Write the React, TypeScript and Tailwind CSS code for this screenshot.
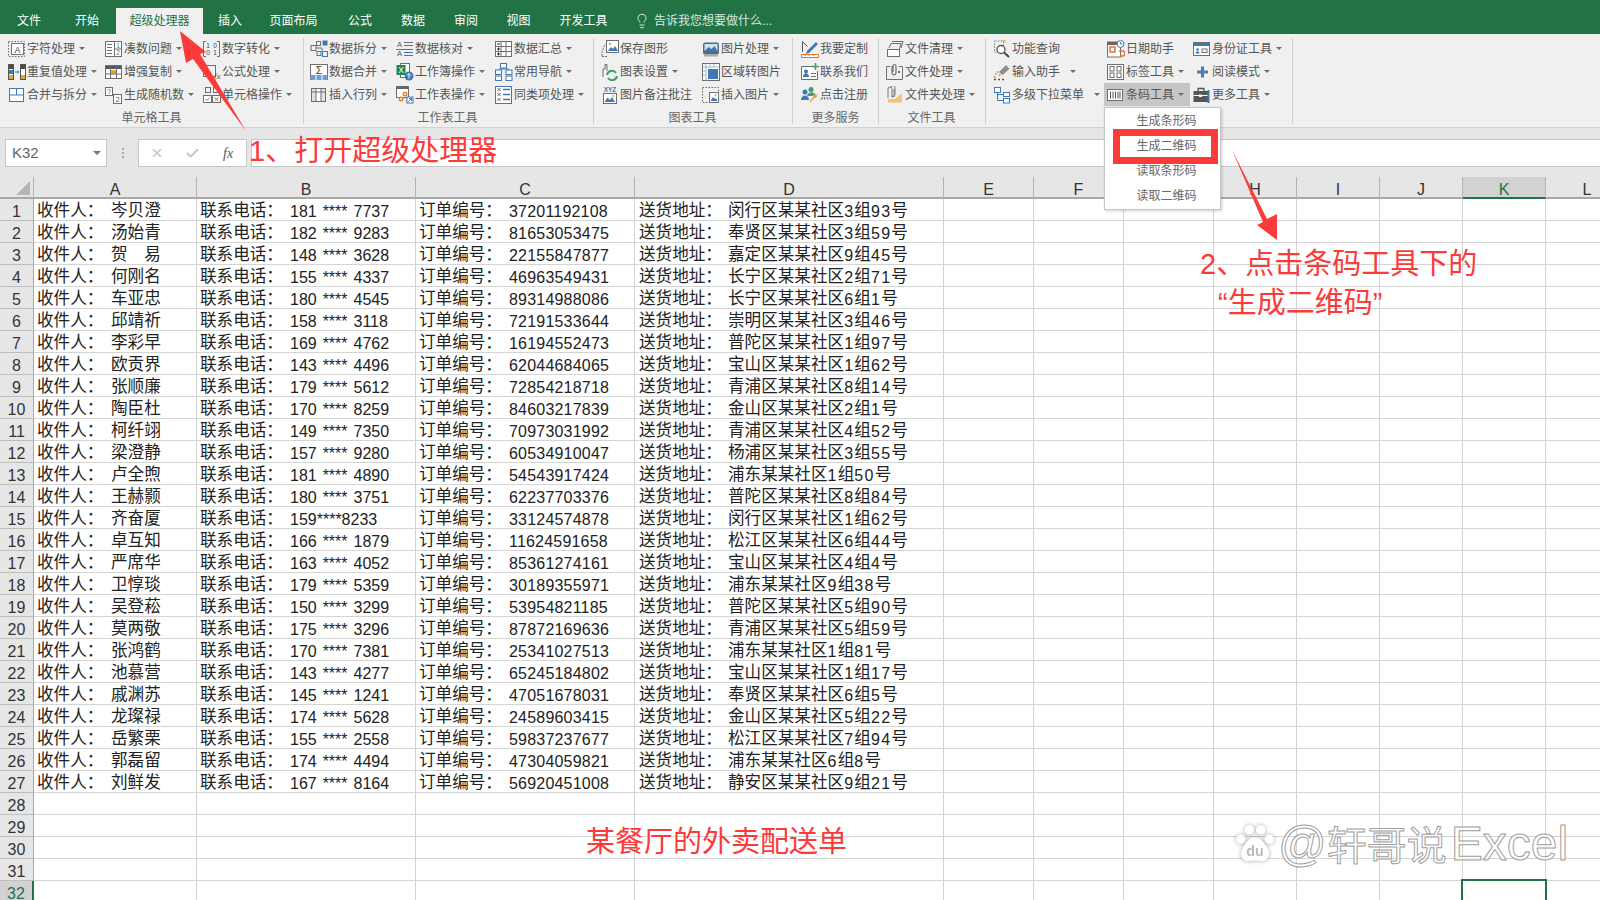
import { Check, Lightbulb, X } from 'lucide-react';
import type { ReactNode } from 'react';

const G = '#6e6e6e';
const B = '#3f78b5';
const O = '#e9a23b';
const GR = '#3f9b73';

function I({ children }: { children: ReactNode }) {
  return (
    <svg viewBox="0 0 18 18" className="w-[18px] h-[18px] shrink-0" fill="none" strokeWidth="1">
      {children}
    </svg>
  );
}

function Tx({ x, y, s, c, t }: { x: number; y: number; s: number; c: string; t: string }) {
  return (
    <text x={x} y={y} fontSize={s} fill={c} textAnchor="middle" fontFamily="Liberation Sans">
      {t}
    </text>
  );
}

const icons: Record<string, ReactNode> = {
  zifu: (
    <I>
      <rect x=".5" y="1.5" width="16" height="15" stroke={G} strokeDasharray="1.5 1.5" />
      <rect x="3.5" y="3.5" width="12" height="11" fill="#fff" stroke="#777" />
      <Tx x={9.5} y={12.5} s={9} c="#444" t="A" />
    </I>
  ),
  coushu: (
    <I>
      <rect x=".5" y="1.5" width="16" height="15" fill="#fff" stroke={G} />
      <path d="M2 4.500h5M2 7.500h5M2 10.500h5M2 13.500h5M9.500 2v14M9.500 9h7" stroke={G} />
      <Tx x={13} y={7.5} s={6.5} c={B} t="1" />
      <Tx x={13} y={15} s={6.5} c={B} t="2" />
    </I>
  ),
  shuzi: (
    <I>
      <path d="M3 1.500H.5v15H3M14 1.500h2.500v15H14" stroke={G} />
      <Tx x={5} y={8} s={6.5} c="#444" t="1" />
      <Tx x={12} y={8} s={6.5} c="#444" t="0" />
      <Tx x={5} y={15} s={6.5} c="#444" t="0" />
      <Tx x={12} y={15} s={6.5} c="#444" t="1" />
    </I>
  ),
  chongfu: (
    <I>
      <rect x=".5" y="1.5" width="5" height="15" fill="#fff" stroke="#555" />
      <rect x="12.5" y="1.5" width="5" height="15" fill="#fff" stroke="#555" />
      <rect x="1" y="2" width="4" height="4" fill="#4a4a4a" />
      <rect x="1" y="7" width="4" height="4" fill={B} />
      <rect x="1" y="12" width="4" height="4" fill={O} />
      <rect x="13" y="2" width="4" height="4" fill="#4a4a4a" />
      <rect x="13" y="12" width="4" height="4" fill={O} />
      <path d="M7 9h4M9.500 7.500 11 9l-1.500 1.500" stroke={B} />
    </I>
  ),
  zengqiang: (
    <I>
      <rect x=".5" y="2.5" width="16" height="13" fill="#fff" stroke={G} />
      <rect x="1" y="3" width="15" height="3" fill="#475a70" />
      <rect x="5.5" y="7" width="6" height="4" fill={O} />
      <path d="M5.500 3v12M11.500 3v12M1 11h15" stroke={G} />
    </I>
  ),
  gongshi: (
    <I>
      <rect x=".5" y="2.5" width="12" height="11" stroke={G} />
      <text x="11" y="16" fontSize="9" fontStyle="italic" fill="#555" fontFamily="Liberation Serif">
        fx
      </text>
    </I>
  ),
  hebing: (
    <I>
      <rect x="1.5" y="2.5" width="14" height="13" fill="#fff" stroke={B} />
      <path d="M1.500 9h14M8.500 2.500V9" stroke={B} />
    </I>
  ),
  suiji: (
    <I>
      <rect x=".5" y="1.5" width="7" height="8" fill="#fff" stroke={G} />
      <rect x="8.5" y="8.5" width="8" height="9" fill="#fff" stroke={G} />
      <Tx x={4} y={8} s={6.5} c="#555" t="?" />
      <Tx x={12.5} y={16} s={7.5} c="#555" t="2" />
    </I>
  ),
  danyuan: (
    <I>
      <rect x="2.5" y="1.5" width="5" height="5" stroke={G} />
      <rect x="10.5" y="1.5" width="5" height="5" stroke={G} />
      <rect x=".5" y="9.5" width="8" height="7" fill="#fff" stroke={G} />
      <rect x="9.5" y="9.5" width="8" height="7" fill="#fff" stroke={G} />
      <path d="m2.500 13 1.500 1.500L7 11.500" stroke={GR} />
      <path d="m11.500 11.500 4 3.500m0-3.500-4 3.500" stroke="#d9534f" />
    </I>
  ),
  chaifen: (
    <I>
      <rect x="1" y="5.5" width="5" height="5" stroke={G} />
      <rect x="6.5" y="1.5" width="4" height="4" stroke={G} />
      <rect x="12.5" y=".5" width="5" height="5" fill={B} />
      <rect x="7" y="11.5" width="4" height="4" stroke={G} />
      <rect x="12.5" y="11.5" width="5" height="5" stroke={B} />
      <path d="M6 8h6M12 8v3" stroke={B} />
    </I>
  ),
  hedui: (
    <I>
      <Tx x={3.5} y={7} s={7.5} c="#555" t="A" />
      <Tx x={3.5} y={16} s={7.5} c="#555" t="A" />
      <path d="M8 2.500h9M8 5.500h9M0 9.500h17" stroke={G} />
      <path d="M8 12.500h9M8 15.500h9" stroke={B} />
    </I>
  ),
  huizong: (
    <I>
      <rect x=".5" y="1.5" width="16" height="15" fill="#fff" stroke={G} />
      <path d="M.5 6.500h16M.5 11.500h16M6 1.500v15M11 1.500v15" stroke={G} />
      <path d="M2 4h3M2 9h3M3.500 7.500v3M2 14h3M3.500 12.500v3" stroke="#333" />
    </I>
  ),
  hebing2: (
    <I>
      <rect x=".5" y="1.5" width="17" height="15" fill="#fff" stroke={G} />
      <Tx x={9} y={10.5} s={10} c="#333" t="Σ" />
      <rect x=".5" y="12" width="17" height="5" fill="#6fa0d2" />
      <path d="M6 12v5M12 12v5" stroke="#fff" />
    </I>
  ),
  gongzuobu: (
    <I>
      <rect x="4.5" y=".5" width="9" height="14" fill="#fff" stroke={G} />
      <rect x=".5" y="2" width="9" height="10" fill="#23874e" />
      <Tx x={5} y={10} s={8.5} c="#fff" t="X" />
      <circle cx="13" cy="13" r="4.5" fill={B} />
      <path d="M13 15.500v-4.500M11 12.500l2-2 2 2" stroke="#fff" />
    </I>
  ),
  daohang: (
    <I>
      <rect x="5.5" y=".5" width="6" height="4.5" fill="#fff" stroke={B} />
      <rect x=".5" y="7" width="6" height="4.5" fill="#fff" stroke={B} />
      <rect x=".5" y="13" width="6" height="4.5" fill="#fff" stroke={B} />
      <rect x="11" y="7" width="6" height="4.5" fill="#fff" stroke={B} />
      <rect x="11" y="13" width="6" height="4.5" fill="#fff" stroke={B} />
      <path d="M8.500 5v1M3.500 6h10v1" stroke={B} />
    </I>
  ),
  hanglie: (
    <I>
      <rect x="1.5" y="2.5" width="14" height="13" fill="#dfe3e8" stroke={G} />
      <rect x="6" y="3" width="5" height="12" fill="#fff" />
      <path d="M6 2.500v13M11 2.500v13M1.500 6h14" stroke={G} />
    </I>
  ),
  gongzuobiao: (
    <I>
      <rect x=".5" y=".5" width="12" height="11" fill="#fff" stroke={G} />
      <rect x=".5" y=".5" width="12" height="2.5" fill="#666" />
      <circle cx="9" cy="8" r="2.500" fill="#e8822a" />
      <circle cx="5" cy="13" r="2.500" fill="#e8822a" />
      <circle cx="9" cy="8" r="1" fill="#fff" />
      <circle cx="5" cy="13" r="1" fill="#fff" />
      <rect x="11" y="11" width="6" height="6" fill="#fff" stroke={B} />
      <path d="m12.500 15.500 3-3m-2.500 0h2.500V15" stroke={B} />
    </I>
  ),
  tonglei: (
    <I>
      <rect x=".5" y=".5" width="16" height="17" fill="#fff" stroke={B} />
      <path d="M8 3.500h7M8 8.500h7M8 13.500h7" stroke={B} strokeWidth="1.5" />
      <path d="m2.500 2 3 3m0-3-3 3m0 2 3 3m0-3-3 3m0 2 3 3m0-3-3 3" stroke={G} />
    </I>
  ),
  baocun: (
    <I>
      <path d="M1 16.500h6M1 16v-4l3-8" stroke={G} strokeDasharray="2 1" />
      <rect x="5.5" y=".5" width="12" height="12" fill="#fff" stroke={G} />
      <path d="m7 11 3-4 2 2 2-3 3 5z" fill={B} />
      <circle cx="9" cy="4" r="1.2" fill={O} />
    </I>
  ),
  tubiao: (
    <I>
      <path d="M2 14V6h2V1.500h2V8" stroke={G} />
      <path d="M6 12a5 5 0 0 1 9-2M16 13a5 5 0 0 1-9 2" stroke={GR} strokeWidth="2" />
    </I>
  ),
  beizhu: (
    <I>
      <text x="9" y="6" fontSize="6.5" fontWeight="bold" fill={B} textAnchor="middle" fontFamily="Liberation Sans">
        XYZ
      </text>
      <rect x="2.5" y="7.5" width="13" height="10" fill="#fff" stroke={G} />
      <path d="m3.500 16 3-4.500 2.500 2.500 2-3 3 5z" fill={B} />
      <circle cx="12" cy="10" r="1" fill={O} />
    </I>
  ),
  tupian: (
    <I>
      <rect x="1" y="2.5" width="16" height="12" rx="2" fill="#5c6a72" />
      <rect x="2.5" y="4" width="13" height="7" fill="#cfe3ee" />
      <path d="m2.500 11 4-4 3 2 3-3 3 5z" fill={B} />
      <path d="M2 15.500h14" stroke="#a8a8a8" strokeWidth="2" />
    </I>
  ),
  quyu: (
    <I>
      <rect x=".5" y=".5" width="17" height="17" fill="#fff" stroke={G} />
      <path d="M.5 4h17M4 .5v17M1 8h3M1 12h3M8 1v3M12 1v3" stroke="#9db7d3" />
      <rect x="6" y="6" width="10" height="10" fill={B} />
    </I>
  ),
  charu: (
    <I>
      <rect x=".5" y="1.5" width="16" height="15" stroke={G} strokeDasharray="1.5 1.5" />
      <rect x="7.5" y="6.5" width="9" height="10" fill="#fff" stroke={G} />
      <path d="m8.500 15 2.500-4 2 2 1-1 1.500 3z" fill={B} />
      <circle cx="13.5" cy="9" r="1" fill={O} />
    </I>
  ),
  dingzhi: (
    <I>
      <path d="M1.500 12V1.500l5 5" stroke="#555" />
      <path d="m6 11 9-9 2 2-9 9-3 1z" fill={B} />
      <path d="M.5 14.500h17v3H.5z" fill="#fff" stroke="#e0762a" />
      <path d="M4 15v1M8 15v1M12 15v1" stroke="#e0762a" />
    </I>
  ),
  lianxi: (
    <I>
      <path d="M11 3.500H.5v13h16V8" fill="#fff" stroke={G} />
      <circle cx="5" cy="8.5" r="2" fill={B} />
      <path d="M2 14c0-5 6-5 6 0z" fill={B} />
      <path d="M10 10.500h5M10 13.500h5" stroke={G} />
      <path d="M14.500 0v7M11 3.500h7" stroke={GR} strokeWidth="1.5" />
    </I>
  ),
  zhuce: (
    <I>
      <circle cx="4" cy="6" r="2.5" fill={B} />
      <path d="M0 14c0-6 8-6 8 0z" fill={B} />
      <circle cx="10" cy="3.5" r="2.5" fill={GR} />
      <path d="M6 10c1-5 8-5 9 0z" fill={GR} />
      <circle cx="14" cy="10" r="2" fill={O} />
      <path d="m13 11-4 5" stroke={O} strokeWidth="1.5" />
    </I>
  ),
  qingli: (
    <I>
      <rect x="1.5" y="9.5" width="12" height="7" fill="#fff" stroke={G} />
      <path d="M3 8 5 3.500h10L13.500 9M6 1.500h11L15 8" stroke={G} />
    </I>
  ),
  wenjian: (
    <I>
      <path d="M4 3.500H.5v13h16v-13H13" stroke={G} />
      <path d="M6 3v7a2 2 0 0 0 4 0V3a1.500 1.500 0 0 0-3 0v6" stroke="#555" />
      <rect x="12" y="8" width="2" height="2" fill={B} />
    </I>
  ),
  wenjianjia: (
    <I>
      <path d="M2 12V3a2 2 0 0 1 4 0v7a1 1 0 0 0 2 0V3" stroke="#777" />
      <path d="M5 1.500a2 2 0 0 1 4 0v8a2.500 2.500 0 0 1-4 0" stroke="#777" />
      <path d="M2 16.500V13h7l7-6v9.500z" fill="#f0c27a" />
    </I>
  ),
  chaxun: (
    <I>
      <rect x="1.5" y="1" width="9" height="11" stroke="#9a9a9a" strokeDasharray="2 1" />
      <path d="M8 0h4v3" stroke={O} />
      <circle cx="8" cy="9.5" r="4" fill="#fff" stroke="#555" strokeWidth="1.3" />
      <path d="m11 12.500 5 4.500" stroke="#444" strokeWidth="2" />
    </I>
  ),
  shuru: (
    <I>
      <path d="m6 9 7-7 3.500 4-7 6" fill="#8f8f8f" />
      <path d="M2 11h2M4 9h2M6 12h2M1 14h2" stroke="#e0762a" strokeWidth="1.5" strokeDasharray="1.5 1" />
      <path d="M1 16.500h2M5 16.500h2M9 16.500h2" stroke="#555" strokeWidth="1.5" />
    </I>
  ),
  xiala: (
    <I>
      <rect x="1.5" y="1.5" width="6" height="5" fill="#fff" stroke={B} />
      <rect x="10.5" y="6.5" width="6" height="4" fill="#fff" stroke={B} />
      <rect x="10.5" y="12.5" width="6" height="4.5" fill="#fff" stroke={B} />
      <path d="M4.500 6.500v8h6M4.500 8.500h6" stroke={B} />
    </I>
  ),
  riqi: (
    <I>
      <rect x=".5" y="2" width="13" height="15" fill="#fff" stroke={G} />
      <rect x=".5" y="2" width="13" height="3" fill="#666" />
      <rect x="3" y="7" width="5" height="5" fill="#fff" stroke="#e0762a" strokeWidth="1.5" />
      <circle cx="13.5" cy="4" r="3.5" fill="#fff" stroke={B} />
      <path d="M13.500 2v2h2" stroke={B} />
      <path d="M12 11h3.500a2.500 2.500 0 0 1 0 5H13" stroke="#e0762a" strokeWidth="1.5" />
    </I>
  ),
  biaoqian: (
    <I>
      <rect x=".5" y="1.5" width="16" height="15" fill="#fff" stroke={G} />
      <rect x="3" y="3.5" width="4" height="4.5" stroke={G} />
      <rect x="10" y="3.5" width="4" height="4.5" stroke={G} />
      <rect x="3" y="10" width="4" height="4.5" stroke={G} />
      <rect x="10" y="10" width="4" height="4.5" stroke={G} />
    </I>
  ),
  tiaoma: (
    <I>
      <rect x=".5" y="3.5" width="15" height="11" fill="#fff" stroke={G} />
      <path d="M3.500 5.500v7M6 5.500v7M8.500 5.500v7M11 5.500v7M13 5.500v7" stroke="#555" />
    </I>
  ),
  shenfen: (
    <I>
      <rect x=".5" y="2.5" width="16" height="13" fill="#fff" stroke={G} />
      <rect x="1" y="3" width="15" height="3" fill={B} />
      <circle cx="4.5" cy="9.5" r="1.3" fill={B} />
      <path d="M2.500 13.500c0-3 4-3 4 0z" fill={B} />
      <rect x="9" y="9" width="5" height="3.5" stroke={G} />
    </I>
  ),
  yuedu: (
    <I>
      <path d="M9.500 3.500v11M4 9h11" stroke="#4a7fb5" strokeWidth="3" />
    </I>
  ),
  gengduo: (
    <I>
      <rect x=".5" y="5" width="15" height="11" fill="#555" />
      <path d="M5 5V2.500h6V5" stroke="#555" strokeWidth="1.3" />
      <rect x=".5" y="9" width="15" height="1" fill="#fff" />
      <rect x="6" y="8.5" width="3" height="2.5" fill="#fff" />
      <path d="M15.500 4v13" stroke={B} strokeWidth="2" />
    </I>
  ),
};

type Item = { t: string; i: string; caret?: boolean; far?: boolean; on?: boolean };
type Col = { cls: string; items: Item[] };
type Group = { label: string; cls: string; cols: Col[] };

const groups: Group[] = [
  {
    label: '单元格工具',
    cls: 'w-[304px] pl-[8px]',
    cols: [
      { cls: 'w-[97px]', items: [{ t: '字符处理', i: 'zifu', caret: true }, { t: '重复值处理', i: 'chongfu', caret: true }, { t: '合并与拆分', i: 'hebing', caret: true }] },
      { cls: 'w-[98px]', items: [{ t: '凑数问题', i: 'coushu', caret: true }, { t: '增强复制', i: 'zengqiang', caret: true }, { t: '生成随机数', i: 'suiji', caret: true }] },
      { cls: 'w-[100px]', items: [{ t: '数字转化', i: 'shuzi', caret: true }, { t: '公式处理', i: 'gongshi', caret: true }, { t: '单元格操作', i: 'danyuan', caret: true }] },
    ],
  },
  {
    label: '工作表工具',
    cls: 'w-[290px] pl-[6px]',
    cols: [
      { cls: 'w-[86px]', items: [{ t: '数据拆分', i: 'chaifen', caret: true }, { t: '数据合并', i: 'hebing2', caret: true }, { t: '插入行列', i: 'hanglie', caret: true }] },
      { cls: 'w-[99px]', items: [{ t: '数据核对', i: 'hedui', caret: true }, { t: '工作簿操作', i: 'gongzuobu', caret: true }, { t: '工作表操作', i: 'gongzuobiao', caret: true }] },
      { cls: 'w-[95px]', items: [{ t: '数据汇总', i: 'huizong', caret: true }, { t: '常用导航', i: 'daohang', caret: true }, { t: '同类项处理', i: 'tonglei', caret: true }] },
    ],
  },
  {
    label: '图表工具',
    cls: 'w-[199px] pl-[7px]',
    cols: [
      { cls: 'w-[101px]', items: [{ t: '保存图形', i: 'baocun' }, { t: '图表设置', i: 'tubiao', caret: true }, { t: '图片备注批注', i: 'beizhu' }] },
      { cls: 'w-[90px]', items: [{ t: '图片处理', i: 'tupian', caret: true }, { t: '区域转图片', i: 'quyu' }, { t: '插入图片', i: 'charu', caret: true }] },
    ],
  },
  {
    label: '更多服务',
    cls: 'w-[86px] pl-[8px]',
    cols: [{ cls: 'w-[77px]', items: [{ t: '我要定制', i: 'dingzhi' }, { t: '联系我们', i: 'lianxi' }, { t: '点击注册', i: 'zhuce' }] }],
  },
  {
    label: '文件工具',
    cls: 'w-[107px] pl-[7px]',
    cols: [{ cls: 'w-[99px]', items: [{ t: '文件清理', i: 'qingli', caret: true }, { t: '文件处理', i: 'wenjian', caret: true }, { t: '文件夹处理', i: 'wenjianjia', caret: true }] }],
  },
  {
    label: '',
    cls: 'w-[307px] pl-[7px]',
    cols: [
      { cls: 'w-[114px]', items: [{ t: '功能查询', i: 'chaxun' }, { t: '输入助手', i: 'shuru', caret: true, far: true }, { t: '多级下拉菜单', i: 'xiala', caret: true, far: true }] },
      { cls: 'w-[86px]', items: [{ t: '日期助手', i: 'riqi' }, { t: '标签工具', i: 'biaoqian', caret: true }, { t: '条码工具', i: 'tiaoma', caret: true, on: true }] },
      { cls: 'w-[90px]', items: [{ t: '身份证工具', i: 'shenfen', caret: true }, { t: '阅读模式', i: 'yuedu', caret: true }, { t: '更多工具', i: 'gengduo', caret: true }] },
    ],
  },
];

const tabs = [
  { t: '文件', cls: 'w-[58px]' },
  { t: '开始', cls: 'w-[58px]' },
  { t: '超级处理器', cls: 'w-[87px] bg-[#f0f0f0] text-[#217346]' },
  { t: '插入', cls: 'w-[54px]' },
  { t: '页面布局', cls: 'w-[73px]' },
  { t: '公式', cls: 'w-[60px]' },
  { t: '数据', cls: 'w-[46px]' },
  { t: '审阅', cls: 'w-[60px]' },
  { t: '视图', cls: 'w-[45px]' },
  { t: '开发工具', cls: 'w-[85px]' },
];

const rows: [string, string, string, string][] = [
  ['岑贝澄', '181 **** 7737', '37201192108', '闵行区某某社区3组93号'],
  ['汤始青', '182 **** 9283', '81653053475', '奉贤区某某社区3组59号'],
  ['贺　易', '148 **** 3628', '22155847877', '嘉定区某某社区9组45号'],
  ['何刚名', '155 **** 4337', '46963549431', '长宁区某某社区2组71号'],
  ['车亚忠', '180 **** 4545', '89314988086', '长宁区某某社区6组1号'],
  ['邱靖祈', '158 **** 3118', '72191533644', '崇明区某某社区3组46号'],
  ['李彩早', '169 **** 4762', '16194552473', '普陀区某某社区1组97号'],
  ['欧贡界', '143 **** 4496', '62044684065', '宝山区某某社区1组62号'],
  ['张顺廉', '179 **** 5612', '72854218718', '青浦区某某社区8组14号'],
  ['陶臣杜', '170 **** 8259', '84603217839', '金山区某某社区2组1号'],
  ['柯纤翊', '149 **** 7350', '70973031992', '青浦区某某社区4组52号'],
  ['梁澄静', '157 **** 9280', '60534910047', '杨浦区某某社区3组55号'],
  ['卢全煦', '181 **** 4890', '54543917424', '浦东某某社区1组50号'],
  ['王赫颢', '180 **** 3751', '62237703376', '普陀区某某社区8组84号'],
  ['齐奋厦', '159****8233', '33124574878', '闵行区某某社区1组62号'],
  ['卓互知', '166 **** 1879', '11624591658', '松江区某某社区6组44号'],
  ['严席华', '163 **** 4052', '85361274161', '宝山区某某社区4组4号'],
  ['卫惇琰', '179 **** 5359', '30189355971', '浦东某某社区9组38号'],
  ['吴登菘', '150 **** 3299', '53954821185', '普陀区某某社区5组90号'],
  ['莫两敬', '175 **** 3296', '87872169636', '青浦区某某社区5组59号'],
  ['张鸿鹤', '170 **** 7381', '25341027513', '浦东某某社区1组81号'],
  ['池慕营', '143 **** 4277', '65245184802', '宝山区某某社区1组17号'],
  ['戚渊苏', '145 **** 1241', '47051678031', '奉贤区某某社区6组5号'],
  ['龙璨禄', '174 **** 5628', '24589603415', '金山区某某社区5组22号'],
  ['岳繁栗', '155 **** 2558', '59837237677', '松江区某某社区7组94号'],
  ['郭磊留', '174 **** 4494', '47304059821', '浦东某某社区6组8号'],
  ['刘鲜发', '167 **** 8164', '56920451008', '静安区某某社区9组21号'],
];

const letters = ['A', 'B', 'C', 'D', 'E', 'F', 'G', 'H', 'I', 'J', 'K', 'L'];
// L runs past the window edge, the root clips it
const sheetCols =
  'grid grid-cols-[34px_163px_219px_219px_309px_90px_90px_90px_83px_83px_83px_83px_83px]';
const cellBase =
  'h-[22px] border-r border-b border-[#d4d4d4] flex items-center pt-[4px] overflow-hidden whitespace-nowrap';

// cjk glyphs in the shot run a bit wider than the digits, so size them apart
function Mix({ text }: { text: string }) {
  const runs = text.match(/[\u3000\u4e00-\u9fff\uff1a]+|[^\u3000\u4e00-\u9fff\uff1a]+/g) ?? [];
  return (
    <>
      {runs.map((r, i) =>
        /[\u3000\u4e00-\u9fff\uff1a]/.test(r) ? (
          <span key={i} className="text-[16.6px]">
            {r}
          </span>
        ) : (
          <span key={i} className="tracking-[1.3px]">
            {r}
          </span>
        )
      )}
    </>
  );
}

function Caret({ far }: { far?: boolean }) {
  return (
    <span
      className={`w-0 h-0 border-x-[3px] border-t-[3px] border-x-transparent border-t-[#6e6e6e] ${far ? 'ml-[10px]' : 'ml-[4px]'}`}
    />
  );
}

function ToolItem({ item }: { item: Item }) {
  return (
    <div
      className={`flex items-center h-[23px] whitespace-nowrap ${item.on ? '-ml-[3px] pl-[3px] w-[86px] bg-[#c6c6c6]' : ''}`}
    >
      {icons[item.i]}
      <span className="ml-[1px]">{item.t}</span>
      {item.caret && <Caret far={item.far} />}
    </div>
  );
}

function Ribbon() {
  return (
    <div className="h-[94px] bg-[#f0f0f0] border-b border-[#d2d2d2] flex items-start pt-[4px] text-[12px] leading-none text-[#555]">
      {groups.map((g, idx) => (
        <div key={idx} className={`h-[86px] flex flex-col border-r border-[#cfcfcf] ${g.cls}`}>
          <div className="flex -mt-px">
            {g.cols.map((c, ci) => (
              <div key={ci} className={c.cls}>
                {c.items.map((it) => (
                  <ToolItem key={it.t} item={it} />
                ))}
              </div>
            ))}
          </div>
          <div className="mt-auto -ml-[8px] h-[14px] leading-[16px] text-center text-[#666]">{g.label}</div>
        </div>
      ))}
    </div>
  );
}

function FormulaBar() {
  return (
    <div className="bg-[#e6e6e6] h-[49px] pt-[11px] flex items-start">
      <div className="ml-[5px] w-[102px] h-[28px] bg-white border border-[#c6c6c6] flex items-center justify-between pl-[6px] pr-[5px] text-[15px] text-[#666]">
        K32
        <span className="w-0 h-0 border-x-[4px] border-t-[4px] border-x-transparent border-t-[#777]" />
      </div>
      <div className="w-[31px] h-[28px] flex flex-col items-center justify-center gap-[2px]">
        <span className="w-[2px] h-[2px] bg-[#aaa]" />
        <span className="w-[2px] h-[2px] bg-[#aaa]" />
        <span className="w-[2px] h-[2px] bg-[#aaa]" />
      </div>
      <div className="w-[109px] h-[28px] bg-white border border-[#c6c6c6] flex items-center">
        <X className="w-[14px] h-[14px] ml-[11px] text-[#c4c4c4]" strokeWidth={2.5} />
        <Check className="w-[15px] h-[15px] ml-[21px] text-[#c4c4c4]" strokeWidth={3} />
        <span className="ml-[23px] text-[14px] italic font-['Liberation_Serif',serif] text-[#555]">fx</span>
      </div>
      <div className="ml-[4px] flex-1 h-[28px] bg-white border-y border-l border-[#c6c6c6]" />
    </div>
  );
}

function Sheet() {
  return (
    <div className={`${sheetCols} text-[16px] leading-none text-[#222] bg-white`}>
      <div className="h-[22px] bg-[#e6e6e6] border-r border-b-2 border-r-[#b4b4b4] border-b-[#a8a8a8] relative">
        <span className="absolute right-[3px] bottom-[2px] w-0 h-0 border-l-[14px] border-t-[14px] border-l-transparent border-t-transparent border-b-0 border-r-[14px] border-r-[#b5b5b5]" />
      </div>
      {letters.map((l) => (
        <div
          key={l}
          className={`h-[22px] flex items-center justify-center border-r border-r-[#b4b4b4] border-b-2 pt-[5px] ${
            l === 'K' ? 'bg-[#d2d2d2] text-[#217346] border-b-[#217346]' : 'bg-[#e6e6e6] text-[#333] border-b-[#a8a8a8]'
          }`}
        >
          {/* G sits under the open menu */}
          {l === 'G' ? '' : l}
        </div>
      ))}
      {Array.from({ length: 32 }, (_, r) => {
        const row = rows[r];
        const cur = r === 31;
        return (
          <div key={r} className="contents">
            <div
              className={`h-[22px] flex items-center justify-center pt-[4px] border-b border-b-[#bdbdbd] ${
                cur ? 'bg-[#d2d2d2] text-[#217346] border-r-2 border-r-[#217346]' : 'bg-[#e6e6e6] text-[#333] border-r border-r-[#a8a8a8]'
              }`}
            >
              {r + 1}
            </div>
            <div className={`${cellBase} pl-[3px]`}>
              {row && (
                <>
                  <span className="w-[74px] shrink-0">
                    <Mix text="收件人：" />
                  </span>
                  <Mix text={row[0]} />
                </>
              )}
            </div>
            <div className={`${cellBase} pl-[3px]`}>
              {row && (
                <>
                  <span className="w-[90px] shrink-0">
                    <Mix text="联系电话：" />
                  </span>
                  <span className="[word-spacing:1.5px]">{row[1]}</span>
                </>
              )}
            </div>
            <div className={`${cellBase} pl-[3px]`}>
              {row && (
                <>
                  <span className="w-[90px] shrink-0">
                    <Mix text="订单编号：" />
                  </span>
                  <span className="tracking-[0.2px]">{row[2]}</span>
                </>
              )}
            </div>
            <div className={`${cellBase} pl-[4px]`}>
              {row && (
                <>
                  <span className="w-[89px] shrink-0">
                    <Mix text="送货地址：" />
                  </span>
                  <Mix text={row[3]} />
                </>
              )}
            </div>
            {letters.slice(4).map((l) => (
              <div key={l} className={`${cellBase} relative overflow-visible`}>
                {cur && l === 'K' && (
                  <span className="absolute -left-[2px] -top-[2px] w-[86px] h-[30px] border-2 border-[#217346]" />
                )}
              </div>
            ))}
          </div>
        );
      })}
    </div>
  );
}

function BarcodeMenu() {
  return (
    <div className="absolute left-[1104px] top-[107px] w-[117px] h-[103px] bg-white border border-[#c6c6c6] shadow-[1px_1px_3px_rgba(0,0,0,0.2)] pt-px pl-[8px] text-[12px] text-[#666] text-center">
      {['生成条形码', '生成二维码', '读取条形码', '读取二维码'].map((t) => (
        <div key={t} className="h-[25px] leading-[25px]">
          {t}
        </div>
      ))}
      <span className="absolute left-[8px] top-[21px] w-[105px] h-[35px] border-[7px] border-[#fb3a3a]" />
    </div>
  );
}

function Watermark() {
  return (
    <div className="absolute left-[1236px] top-[820px] flex items-center whitespace-nowrap">
      <svg viewBox="0 0 40 42" className="w-[38px] h-[40px] drop-shadow-[0_0_2px_rgba(0,0,0,0.35)]">
        <circle cx="5" cy="16" r="5" fill="#fff" />
        <circle cx="14" cy="6" r="5" fill="#fff" />
        <circle cx="26" cy="6" r="5" fill="#fff" />
        <circle cx="35" cy="16" r="5" fill="#fff" />
        <path d="M20 14c7 0 11 8 14 13 3 7-2 13-8 12-4-1-8-1-12 0-6 1-11-5-8-12 3-5 7-13 14-13z" fill="#fff" />
        <text x="20" y="34" fontSize="15" fontWeight="bold" textAnchor="middle" fill="#bbb" fontFamily="Liberation Sans">
          du
        </text>
      </svg>
      <span className="ml-[4px] text-[48px] leading-none text-white/70 [-webkit-text-stroke:1px_#a0a0a0]">
        @<span className="text-[40px]">轩哥说</span>
        <span className="ml-[4px]">Excel</span>
      </span>
    </div>
  );
}

export default function App() {
  return (
    <div className="relative w-[1600px] h-[900px] overflow-hidden bg-white font-['Liberation_Sans','Noto_Sans_CJK_SC',sans-serif]">
      <div className="h-[34px] bg-[#217346] flex items-end text-[12px] text-white">
        {tabs.map((tab) => (
          <div key={tab.t} className={`h-[26px] flex items-center justify-center ${tab.cls}`}>
            {tab.t}
          </div>
        ))}
        <div className="h-[26px] flex items-center ml-[8px] text-[#dbe9e1]">
          <Lightbulb className="w-4 h-4" strokeWidth={1.5} />
          <span className="ml-[4px]">告诉我您想要做什么...</span>
        </div>
      </div>
      <Ribbon />
      <FormulaBar />
      <Sheet />

      <BarcodeMenu />

      <svg className="absolute left-0 top-0 w-[1600px] h-[900px] pointer-events-none" viewBox="0 0 1600 900">
        <polygon points="180,31 206,52 200,54 246,131 193,59 186,63" fill="#fb3a3a" />
        <polygon points="1232,150 1267,219 1277,214 1277,240 1257,225 1263,222" fill="#fb3a3a" />
      </svg>

      <div className="absolute left-[249px] top-[131px] text-[29px] leading-[40px] text-[#fb3a3a] whitespace-nowrap">
        1、打开超级处理器
      </div>
      <div className="absolute left-[1200px] top-[245px] text-[29px] leading-[39px] text-[#fb3a3a] whitespace-nowrap">
        2、点击条码工具下的
        <div className="ml-[18px]">“生成二维码”</div>
      </div>
      <div className="absolute left-[586px] top-[822px] text-[29px] leading-[40px] text-[#fb3a3a] whitespace-nowrap">
        某餐厅的外卖配送单
      </div>
      <Watermark />
    </div>
  );
}
